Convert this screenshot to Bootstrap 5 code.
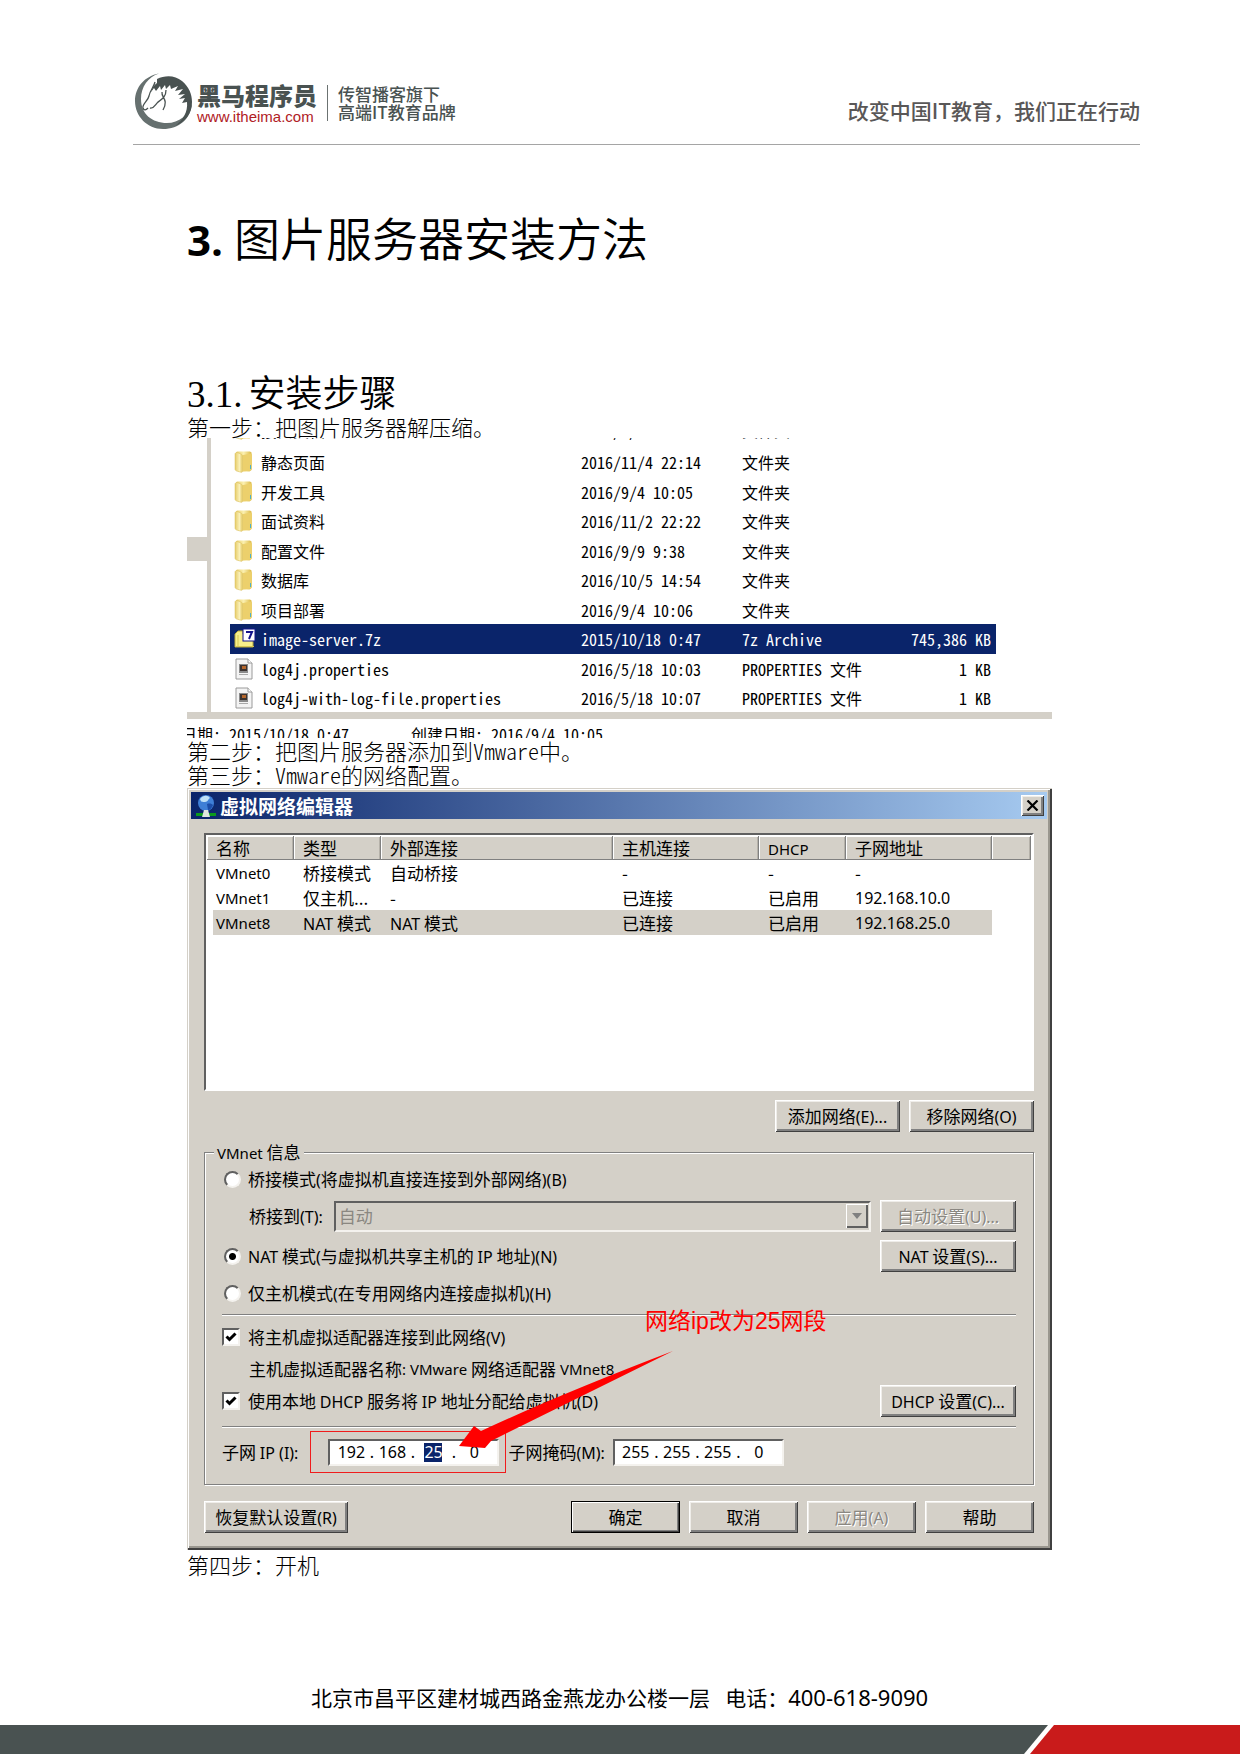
<!DOCTYPE html>
<html lang="zh-CN">
<head>
<meta charset="utf-8">
<meta name="viewport" content="width=device-width, initial-scale=1">
<title>图片服务器安装方法</title>
<link href="https://cdn.jsdelivr.net/npm/bootstrap@5.3.0/dist/css/bootstrap.min.css" rel="stylesheet">
<style>
  :root { --face: #d4d0c8; --navy: #0a246a; }
  body { font-family: "Noto Sans CJK SC", sans-serif; color: #000; background: #fff; }

  /* page header */
  .page-head { margin: 68px 100px 0 133px; height: 77px; border-bottom: 1px solid #a5a5a5; }
  .brand-text { padding: 14px 0 0 2px; }
  .brand-name { font-size: 24px; line-height: 26px; font-weight: 900; color: #495251; }
  .brand-url { font: 15px/18px "Liberation Sans", sans-serif; color: #b0201f; text-decoration: none; }
  .brand-tag { margin: 17px 0 0 10px; padding-left: 10px; font-size: 17px; line-height: 18px; font-weight: 500; color: #495251; border-left: 1px solid #6b7271; }
  .slogan { font-size: 21px; line-height: 28px; font-weight: 500; color: #595757; }

  /* document text */
  .doc { padding: 0 188px 0 187px; }
  .doc h1 { font-size: 46px; line-height: 60px; font-weight: 350; margin: 61px 0 0; }
  .doc h1 b { font-family: "Open Sans", sans-serif; font-size: 42px; font-weight: 700; margin-right: 11px; }
  .doc h2 { font: 350 37px/38px "Liberation Serif", "Noto Sans CJK SC", serif; margin: 106px 0 0; }
  .doc h2 span { margin-right: 6px; }
  .step { font-size: 22px; line-height: 24px; font-weight: 300; margin: 0; font-feature-settings: "hwid"; }
  .step-next { margin-top: 2px; }

  /* file list */
  .explorer { height: 300px; overflow: hidden; font-size: 16px; font-feature-settings: "hwid"; font-variant-ligatures: none; }
  .explorer-top { height: 274px; }
  .tree-edge { width: 24px; height: 274px; border-right: 4px solid var(--face); padding-top: 99px; }
  .tree-edge div { height: 24px; background: var(--face); }
  .files { width: 766px; margin: -20px 0 0 19px; table-layout: fixed; line-height: 28px; white-space: nowrap; }
  .files tr { height: 29px; }
  .files tr:nth-child(even) { height: 30px; }
  .files td { padding: 0; vertical-align: middle; }
  .files tr:first-child td { line-height: 24px; vertical-align: top; }
  .files td:last-child { padding-right: 5px; }
  .files svg { display: block; margin-left: 4px; }
  .files .picked { background: var(--navy); color: #fff; }
  .explorer-bar { height: 7px; background: var(--face); }
  .explorer-info { line-height: 22px; height: 19px; overflow: hidden; padding-top: 4px; margin-left: -6px; }
  .explorer-info div:first-child { width: 230px; }

  /* dialog */
  .dlg { margin-top: 2px; width: 865px; max-width: 100%; background: var(--face); padding: 4px 5px 17px 4px;
    box-shadow: inset 1px 1px var(--face), inset -2px -2px #404040, inset 2px 2px #fff, inset -4px -4px #9a978f; font-size: 17px; line-height: 24px; }
  .la { font-family: "Noto Sans", sans-serif; font-size: 16px; }
  .vm { font-family: "Noto Sans", sans-serif; font-size: 15px; }
  span.la, span.vm { line-height: 1; }
  .dlg-title { height: 27px; background: linear-gradient(90deg, var(--navy), #a6caf0); padding: 0 3px 0 5px; color: #fff; }
  .dlg-title h3 { font-size: 19px; line-height: 26px; font-weight: 700; margin: 0; }
  .dlg-body { margin: 14px 13px 0; }
  .btn-row { gap: 9px; }
  .btn3d { height: 32px; padding: 0; border: 0; border-radius: 0; background: var(--face); color: #000; font-size: 17px; line-height: 30px; white-space: nowrap;
    box-shadow: inset 1px 1px #fff, inset -1px -1px #404040, inset 2px 2px #efede9, inset -3px -3px #808080; }
  .btn3d:hover { background: var(--face); color: #000; }
  .btn3d:disabled { background: var(--face); color: #8a8781; text-shadow: 1px 1px #fff; opacity: 1; border: 0; }
  .btn3d.primary { box-shadow: inset 0 0 0 1px #000, inset 2px 2px #fff, inset -2px -2px #404040, inset -3px -3px #808080; }
  .w-net { width: 125px; } .w-set { width: 136px; } .w-act { width: 109px; } .w-reset { width: 144px; }
  .btn3d.closer { width: 23px; height: 21px; }

  .listbox { height: 258px; background: #fff; border: 2px solid; border-color: #606060 #fff #fff #606060; padding: 1px; margin-bottom: 9px; }
  .nets { width: 100%; table-layout: fixed; white-space: nowrap; }
  .nets th { height: 24px; padding: 0 0 0 9px; font-weight: 400; line-height: 24px; background: var(--face);
    box-shadow: inset -1px -1px #808080, inset 1px 1px #fff, inset -2px 0 #b5b1a9; }
  .nets td { padding: 0 0 0 9px; height: 25px; line-height: 24px; overflow: hidden; }
  .nets .chosen td { background: var(--face); }
  .nets .chosen td:first-child { box-shadow: inset 6px 0 #fff; }

  .group3d { margin-top: 8px; border: 1px solid #808080; box-shadow: 1px 1px #fff, inset 1px 1px #fff; padding: 0 17px 16px; }
  .group3d legend { float: none; width: auto; height: 24px; font-size: 17px; line-height: 24px; margin: 0 0 -1px -8px; padding: 0 3px; background: var(--face); }
  .line32 { height: 32px; }
  .gap-s { margin-top: 5px; }
  .rule3d { height: 2px; background: #808080; border-bottom: 1px solid #fff; }
  .rule3d.tight { margin: 5px 0; }
  .rule3d.wide { margin: 9px 0 8px; }
  .inset3d { border: 2px solid; border-color: #606060 #f4f2ee #f4f2ee #606060; }
  .tick { appearance: none; flex: none; margin: 0 8px 0 0; width: 18px; height: 18px; background: #fff center/14px no-repeat; border: 2px solid; border-color: #606060 #f4f2ee #f4f2ee #606060; }
  .tick[type=radio] { width: 17px; height: 17px; border-radius: 50%; margin: 0 7px 0 2px; }
  .tick[type=radio]:checked { background-image: radial-gradient(circle, #000 3px, transparent 4px); }
  .tick[type=checkbox]:checked { background-image: url("data:image/svg+xml,%3Csvg xmlns='http://www.w3.org/2000/svg' viewBox='0 0 14 14'%3E%3Cpath d='M2.5 6.5 5.5 9.5 11.5 3.5' fill='none' stroke='%23000' stroke-width='3'/%3E%3C/svg%3E"); }
  .indent { padding-left: 27px; }
  .combo { height: 31px; margin: 0 9px 0 11px; }
  .combo select { appearance: none; border: 0; background: transparent; color: #8a8781; font-size: 17px; line-height: 24px; padding: 0 3px; opacity: 1; min-width: 0; }
  .combo span { width: 22px; height: 24px; margin: 1px; box-shadow: inset 1px 1px #fff, inset -2px -2px #606060; }
  .ipbox { width: 171px; height: 27px; background: #fff; padding-left: 4px; line-height: 22px; }
  .ipbox input { width: 34px; height: 19px; padding: 0; border: 0; text-align: center; background: transparent; }
  .ipbox input.sel { width: 18px; margin: 0 8px; background: var(--navy); color: #fff; }
  .ipbox i { width: 7px; font-style: normal; text-align: center; }
  .ip-frame { width: 196px; height: 42px; border: 1px solid #f01c1c; margin: -5px 2px -5px 12px; padding-left: 17px; }
  .note { left: 458px; top: 516px; font: 23px/34px "Liberation Sans", "Noto Sans CJK SC", sans-serif; color: #f00; }
  .arrow { left: 271px; top: 562px; }

  /* page footer */
  .contact { font-size: 21px; line-height: 30px; margin: 0 0 13px 311px; }
  .contact span { font-family: "Noto Sans", sans-serif; font-size: 22px; line-height: 1; }
  .strip { height: 29px; }
  .strip-a { background: #495251; clip-path: polygon(0 0, 100% 0, calc(100% - 24px) 100%, 0 100%); }
  .strip-b { width: 210px; margin-left: -18px; background: #c91b1b; clip-path: polygon(24px 0, 100% 0, 100% 100%, 0 100%); }
</style>
<script src="https://cdn.jsdelivr.net/npm/bootstrap@5.3.0/dist/js/bootstrap.bundle.min.js" defer></script>
</head>
<body class="min-vh-100 d-flex flex-column">

<svg class="position-absolute" width="0" height="0" aria-hidden="true">
  <defs>
    <linearGradient id="gold" x1="0" x2="1"><stop offset="0" stop-color="#e9cf6b"/><stop offset=".5" stop-color="#fbf0b0"/><stop offset="1" stop-color="#dcb945"/></linearGradient>
    <linearGradient id="flap" x1="0" x2="1"><stop offset="0" stop-color="#e6cc68"/><stop offset=".6" stop-color="#faf0b8"/><stop offset="1" stop-color="#e3c75d"/></linearGradient>
  </defs>
  <symbol id="folder" viewBox="0 0 20 22">
    <path d="M2 1.500 3 .5h13l1.500 1V19l-2 1.500H4z" fill="url(#gold)"/>
    <path d="M9 4l8-1.500 1 1V18l-1.500 1.500L9 20.500z" fill="#ecd06c"/>
    <path d="M1 3c0-1 1-1.500 2-1.500l4 1.500c1 .5 1.500 1 1.500 2V20c0 1-.5 1.500-1.500 1.300L2.500 20C1.500 19.500 1 19 1 18z" fill="url(#flap)" stroke="#d8bc5a" stroke-width=".5"/>
    <path d="M16.500 14v4" stroke="#4bb0c8"/>
  </symbol>
  <symbol id="doc" viewBox="0 0 20 22">
    <path d="M2 1h12l4 4v16H2z" fill="#f4f4f4" stroke="#9a9a9a"/>
    <path d="M14 1v4h4" fill="#fff" stroke="#9a9a9a"/>
    <rect x="5" y="6" width="9" height="9" fill="#8a8a8a"/><rect x="6" y="7" width="7" height="6" fill="#3b3330"/><rect x="8" y="8" width="4" height="3" fill="#b5672c"/>
    <path d="M5 16.500h9" stroke="#aaa"/>
  </symbol>
</svg>

<header class="page-head d-flex">
  <svg class="flex-shrink-0" width="62" height="62" viewBox="0 0 62 62" role="img" aria-label="黑马">
    <path d="M26 5.500C12 8 2 19 2 33c0 15 12 28 28 28 16 0 28-10 29-26-3 12-13 20-25 20-15 0-26-9-26-24C8 19 15 9 26 5.500z" fill="#66706f"/>
    <path d="M24 11C32 7 42 7 49 13c7 6 10 13 10 21 0 12-7 20-17 24 8-6 13-14 12-24l-5 1 3-5-6 1 6-5-7 1 5-6-8 2 3-5-7 3-1-4-4 4-1-4-4 5-1-4-4 5-2-3-3 4c1-4 3-7 6-9z" fill="#495251"/>
    <path d="M22 14c-1 5-5 8-6 14-1 5-7 8-6 12 1 3 3 2 5 0M17 40c4 1 5-3 8-6 4-3 8-5 8-12M29 24c-1 6 7 7 1 18M29 31l-5 4" fill="none" stroke="#495251" stroke-width="1.300"/>
  </svg>
  <div class="brand-text d-flex flex-column">
    <div class="brand-name">黑马程序员</div>
    <a class="brand-url" href="#">www.itheima.com</a>
  </div>
  <div class="brand-tag align-self-start"><div>传智播客旗下</div><div>高端IT教育品牌</div></div>
  <div class="slogan ms-auto mt-4 pt-1">改变中国IT教育，我们正在行动</div>
</header>

<main class="doc">
  <h1><b>3.</b>图片服务器安装方法</h1>
  <h2><span>3.1.</span>安装步骤</h2>
  <p class="step">第一步：把图片服务器解压缩。</p>

  <section class="explorer">
    <div class="explorer-top d-flex">
      <div class="tree-edge"><div></div></div>
      <table class="files">
        <colgroup><col style="width:31px"><col style="width:320px"><col style="width:161px"><col><col style="width:100px"></colgroup>
        <tbody>
        <tr><td><svg width="20" height="22"><use href="#folder"/></svg></td><td>接口文档</td><td>2016/9/4 10:05</td><td>文件夹</td><td></td></tr>
        <tr><td><svg width="20" height="22"><use href="#folder"/></svg></td><td>静态页面</td><td>2016/11/4 22:14</td><td>文件夹</td><td></td></tr>
        <tr><td><svg width="20" height="22"><use href="#folder"/></svg></td><td>开发工具</td><td>2016/9/4 10:05</td><td>文件夹</td><td></td></tr>
        <tr><td><svg width="20" height="22"><use href="#folder"/></svg></td><td>面试资料</td><td>2016/11/2 22:22</td><td>文件夹</td><td></td></tr>
        <tr><td><svg width="20" height="22"><use href="#folder"/></svg></td><td>配置文件</td><td>2016/9/9 9:38</td><td>文件夹</td><td></td></tr>
        <tr><td><svg width="20" height="22"><use href="#folder"/></svg></td><td>数据库</td><td>2016/10/5 14:54</td><td>文件夹</td><td></td></tr>
        <tr><td><svg width="20" height="22"><use href="#folder"/></svg></td><td>项目部署</td><td>2016/9/4 10:06</td><td>文件夹</td><td></td></tr>
        <tr class="picked"><td><svg width="22" height="22" viewBox="0 0 22 22"><path d="M1 6l3-3h5v3h10v13H1z" fill="#f8f08a" stroke="#b9a93c"/><path d="M4 7v11M1 18.500h19" stroke="#d6c650"/><rect x="9" y="1" width="12" height="12" fill="#fff" stroke="#14148c"/><path d="M12 4h6l-3 7" fill="none" stroke="#14148c" stroke-width="2"/></svg></td><td>image-server.7z</td><td>2015/10/18 0:47</td><td>7z Archive</td><td class="text-end">745,386 KB</td></tr>
        <tr><td><svg width="20" height="22"><use href="#doc"/></svg></td><td>log4j.properties</td><td>2016/5/18 10:03</td><td>PROPERTIES 文件</td><td class="text-end">1 KB</td></tr>
        <tr><td><svg width="20" height="22"><use href="#doc"/></svg></td><td>log4j-with-log-file.properties</td><td>2016/5/18 10:07</td><td>PROPERTIES 文件</td><td class="text-end">1 KB</td></tr>
        </tbody>
      </table>
    </div>
    <div class="explorer-bar"></div>
    <div class="explorer-info d-flex"><div>日期: 2015/10/18 0:47</div><div>创建日期: 2016/9/4 10:05</div></div>
  </section>

  <p class="step">第二步：把图片服务器添加到Vmware中。</p>
  <p class="step">第三步：Vmware的网络配置。</p>

  <section class="dlg position-relative">
    <div class="dlg-title d-flex align-items-center">
      <svg class="me-1" width="20" height="24" viewBox="0 0 20 24"><circle cx="10" cy="9" r="8" fill="#3f7fd6"/><path d="M4 5c3-4 8-4 10-1-2 1-2 4-5 4S5 8 4 5z" fill="#bfe0f7"/><path d="M11 10c3-1 5 0 6 1-1 3-3 5-5 5z" fill="#1c4da8"/><path d="M0 19h20v3H0z" fill="#0c9a1c"/><path d="M8 16h4l2 7H6z" fill="#dfe6df"/></svg>
      <h3>虚拟网络编辑器</h3>
      <button class="btn btn3d closer ms-auto d-flex align-items-center justify-content-center" type="button" aria-label="关闭"><svg width="13" height="11" viewBox="0 0 13 11"><path d="M1.500 0.500l10 10M11.500.500l-10 10" stroke="#000" stroke-width="2.200"/></svg></button>
    </div>

    <div class="dlg-body">
      <div class="listbox">
        <table class="nets">
          <colgroup><col style="width:87px"><col style="width:87px"><col style="width:232px"><col style="width:146px"><col style="width:87px"><col style="width:146px"><col></colgroup>
          <thead><tr><th>名称</th><th>类型</th><th>外部连接</th><th>主机连接</th><th><span class="vm">DHCP</span></th><th>子网地址</th><th></th></tr></thead>
          <tbody>
          <tr><td class="vm">VMnet0</td><td>桥接模式</td><td>自动桥接</td><td>-</td><td>-</td><td>-</td><td></td></tr>
          <tr><td class="vm">VMnet1</td><td>仅主机...</td><td>-</td><td>已连接</td><td>已启用</td><td class="la">192.168.10.0</td><td></td></tr>
          <tr class="chosen"><td class="vm">VMnet8</td><td><span class="la">NAT</span> 模式</td><td><span class="la">NAT</span> 模式</td><td>已连接</td><td>已启用</td><td class="la">192.168.25.0</td><td class="bg-white"></td></tr>
          </tbody>
        </table>
      </div>
      <div class="btn-row d-flex justify-content-end">
        <button class="btn btn3d w-net" type="button">添加网络<span class="la">(E)...</span></button>
        <button class="btn btn3d w-net" type="button">移除网络<span class="la">(O)</span></button>
      </div>

      <fieldset class="group3d">
        <legend><span class="vm">VMnet</span> 信息</legend>
        <div class="line32 d-flex align-items-center"><input class="tick" type="radio" name="mode" id="m1"><label for="m1">桥接模式<span class="la">(</span>将虚拟机直接连接到外部网络<span class="la">)(B)</span></label></div>
        <div class="line32 gap-s d-flex align-items-center indent">
          <label for="bridge">桥接到<span class="la">(T):</span></label>
          <div class="combo inset3d flex-fill d-flex align-items-center"><select class="flex-fill" id="bridge" disabled><option>自动</option></select><span class="d-flex align-items-center justify-content-center"><svg width="10" height="6"><path d="M0 0h10l-5 6z" fill="#808080"/></svg></span></div>
          <button class="btn btn3d w-set" type="button" disabled>自动设置<span class="la">(U)...</span></button>
        </div>
        <div class="line32 d-flex align-items-center mt-2"><input class="tick" type="radio" name="mode" id="m2" checked><label for="m2"><span class="la">NAT</span> 模式<span class="la">(</span>与虚拟机共享主机的 <span class="la">IP</span> 地址<span class="la">)(N)</span></label><button class="btn btn3d w-set ms-auto" type="button"><span class="la">NAT</span> 设置<span class="la">(S)...</span></button></div>
        <div class="line32 gap-s d-flex align-items-center"><input class="tick" type="radio" name="mode" id="m3"><label for="m3">仅主机模式<span class="la">(</span>在专用网络内连接虚拟机<span class="la">)(H)</span></label></div>
        <div class="rule3d tight"></div>
        <div class="line32 d-flex align-items-center"><input class="tick" type="checkbox" id="c1" checked><label for="c1">将主机虚拟适配器连接到此网络<span class="la">(V)</span></label></div>
        <div class="line32 d-flex align-items-center indent">主机虚拟适配器名称<span class="vm">:&nbsp;VMware&nbsp;</span>网络适配器<span class="vm">&nbsp;VMnet8</span></div>
        <div class="line32 d-flex align-items-center"><input class="tick" type="checkbox" id="c2" checked><label for="c2">使用本地 <span class="la">DHCP</span> 服务将 <span class="la">IP</span> 地址分配给虚拟机<span class="la">(D)</span></label><button class="btn btn3d w-set ms-auto" type="button"><span class="la">DHCP</span> 设置<span class="la">(C)...</span></button></div>
        <div class="rule3d wide"></div>
        <div class="line32 d-flex align-items-center">
          <label for="ip1">子网 <span class="la">IP (I):</span></label>
          <div class="ip-frame d-flex align-items-center">
            <div class="ipbox inset3d la d-flex align-items-center"><input id="ip1" value="192"><i>.</i><input value="168" aria-label="IP 2"><i>.</i><input class="sel" value="25" aria-label="IP 3"><i>.</i><input value="0" aria-label="IP 4"></div>
          </div>
          <label for="mk1">子网掩码<span class="la">(M):</span></label>
          <div class="ipbox inset3d la d-flex align-items-center ms-2"><input id="mk1" value="255"><i>.</i><input value="255" aria-label="掩码 2"><i>.</i><input value="255" aria-label="掩码 3"><i>.</i><input value="0" aria-label="掩码 4"></div>
        </div>
      </fieldset>

      <div class="btn-row d-flex mt-3">
        <button class="btn btn3d w-reset me-auto" type="button">恢复默认设置<span class="la">(R)</span></button>
        <button class="btn btn3d w-act primary" type="button">确定</button>
        <button class="btn btn3d w-act" type="button">取消</button>
        <button class="btn btn3d w-act" type="button" disabled>应用<span class="la">(A)</span></button>
        <button class="btn btn3d w-act" type="button">帮助</button>
      </div>
    </div>

    <div class="note position-absolute">网络ip改为25网段</div>
    <svg class="arrow position-absolute" width="216" height="100" viewBox="0 0 216 100"><path d="M1 96 16 76 23 81Q100 45 215 1L33 91 27 98z" fill="#f00"/></svg>
  </section>

  <p class="step step-next">第四步：开机</p>
</main>

<footer class="mt-auto">
  <p class="contact">北京市昌平区建材城西路金燕龙办公楼一层 <span>&nbsp;</span> 电话：<span>400-618-9090</span></p>
  <div class="strip d-flex"><div class="strip-a flex-fill"></div><div class="strip-b"></div></div>
</footer>
</body>
</html>
